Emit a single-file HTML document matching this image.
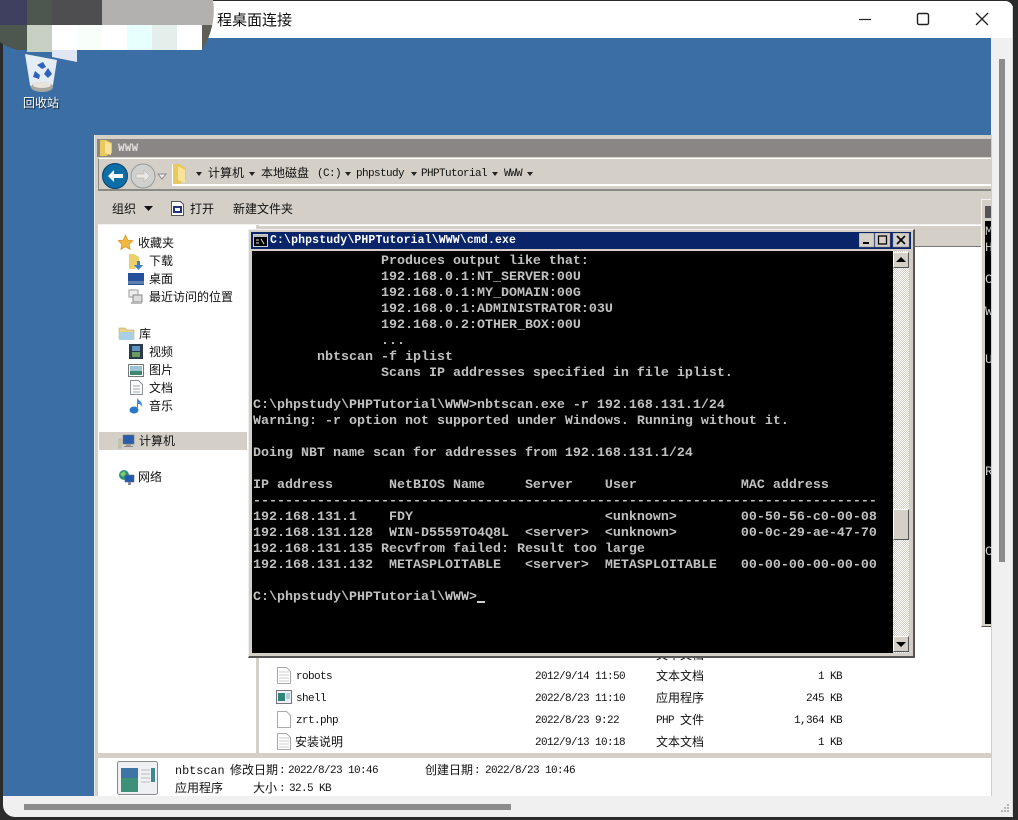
<!DOCTYPE html>
<html><head><meta charset="utf-8">
<style>
html,body{margin:0;padding:0;background:#2b2b2b}
body{width:1018px;height:820px;position:relative;overflow:hidden;font-family:"Liberation Mono","WenQuanYi Zen Hei","Noto Sans CJK SC",monospace;font-size:12px;color:#111}
.a{position:absolute}
.t{position:absolute;white-space:pre;line-height:16px;margin-top:1px}
.n{font-size:11px;letter-spacing:-.6px}
.d{position:absolute;top:172px;width:0;height:0;border:3px solid transparent;border-top:4px solid #222;border-bottom:0}
pre{margin:0}
</style></head><body>
<!-- window frame -->
<div class="a" style="left:3px;top:1px;width:1010px;height:816px;background:#f0f0f0;border-radius:0 8px 0 12px"></div>
<div class="a" style="left:3px;top:1px;width:1010px;height:37px;background:#fff;border-radius:0 8px 0 0"></div>
<div class="a" style="left:3px;top:38px;width:988px;height:758px;background:#3a6ea5"></div>
<div class="a" style="left:1012px;top:6px;width:1px;height:810px;background:#d8d8d8"></div>
<!-- window title -->
<div class="t" style="left:217px;top:9px;line-height:20px;font-size:15px;font-family:'Noto Sans CJK SC',sans-serif;color:#111">程桌面连接</div>
<svg class="a" style="left:850px;top:8px" width="150" height="24" fill="none" stroke="#222">
<path d="M9 11.500H21" stroke-width="1.200"/><rect x="67.500" y="5.500" width="11" height="11" rx="1.500" stroke-width="1.400"/><path d="M126 5L138 17M138 5L126 17" stroke-width="1.300"/>
</svg>
<!-- window scrollbars -->
<div class="a" style="left:999px;top:59px;width:6px;height:503px;background:#8c8c8c"></div>
<div class="a" style="left:24px;top:804px;width:487px;height:6px;background:#8c8c8c"></div>
<svg class="a" style="left:996px;top:801px" width="16" height="15" fill="#b5b5b5"><rect x="11" y="3" width="2" height="2"/><rect x="8" y="6" width="2" height="2"/><rect x="11" y="6" width="2" height="2"/><rect x="5" y="9" width="2" height="2"/><rect x="8" y="9" width="2" height="2"/><rect x="11" y="9" width="2" height="2"/></svg>

<!-- recycle bin -->
<svg class="a" style="left:22px;top:52px" width="38" height="42">
<path d="M3 2L35 8L31 33C29 40 10 40 8 33Z" fill="#e4edf3"/>
<ellipse cx="20" cy="35" rx="11" ry="5" fill="#a8a8a0"/><ellipse cx="20" cy="33" rx="9" ry="3" fill="#e8e4dc"/>
<path d="M15 13l6-3 3 5-4 2zM26 16l4 6-4 4-4-4zM13 19l5 4-1 4-6-2z" fill="#2f62bc"/>
</svg>
<!-- mosaic -->
<div class="a" style="left:0;top:0;width:216px;height:62px;overflow:hidden;clip-path:path('M3 0H213C216 20 210 38 202 50H77V62L52 57L27 52C15 50 6 47 0 42V0Z')">
<div class="a" style="left:0;top:0;width:27px;height:25px;background:#3f4060"></div>
<div class="a" style="left:27px;top:0;width:25px;height:25px;background:#4e5650"></div>
<div class="a" style="left:52px;top:0;width:50px;height:25px;background:#4e4e50"></div>
<div class="a" style="left:102px;top:0;width:114px;height:25px;background:#b3b1af"></div>
<div class="a" style="left:0;top:25px;width:27px;height:25px;background:#4e5650"></div>
<div class="a" style="left:27px;top:25px;width:25px;height:27px;background:#c8d0c4"></div>
<div class="a" style="left:52px;top:25px;width:25px;height:25px;background:#fff"></div>
<div class="a" style="left:77px;top:25px;width:25px;height:25px;background:#f8fffb"></div>
<div class="a" style="left:102px;top:25px;width:25px;height:25px;background:#fff"></div>
<div class="a" style="left:127px;top:25px;width:25px;height:25px;background:#e6ffff"></div>
<div class="a" style="left:152px;top:25px;width:25px;height:25px;background:#e4eeea"></div>
<div class="a" style="left:177px;top:25px;width:25px;height:25px;background:#fff"></div>
<div class="a" style="left:202px;top:25px;width:14px;height:25px;background:#5f5f57"></div>
<div class="a" style="left:52px;top:50px;width:25px;height:12px;background:#e0e6f4"></div>
</div>
<div class="t" style="left:23px;top:95px;font-size:12px;color:#fff;text-shadow:1px 1px 1px #123">回收站</div>

<!-- explorer -->
<div class="a" style="left:94px;top:135px;width:897px;height:661px;background:#d4d0c8;border-left:1px solid #e8e8e4"></div>
<div class="a" style="left:97px;top:139px;width:894px;height:18px;background:#8a8686"></div>
<svg class="a" style="left:99px;top:139px" width="16" height="18"><path d="M1 1h6l6 3v10l-6 3H1z" fill="#e9c95c"/><path d="M6 2l6 3v11l-6-2z" fill="#f7e49a"/></svg>
<div class="t" style="left:118px;top:140px;font-weight:bold;font-size:11px;letter-spacing:.2px;color:#e0ded8">WWW</div>
<div class="a" style="left:98px;top:158px;width:893px;height:33px;border-top:1px solid #fff;border-bottom:2px solid #8a8a86;border-left:1px solid #8a8a86;box-sizing:border-box;background:#d4d0c8"></div>
<div class="a" style="left:172px;top:164px;width:819px;height:22px;background:#d4d0c8;border-left:1px solid #fff;border-bottom:2px solid #fff;box-sizing:border-box"></div>
<svg class="a" style="left:100px;top:160px" width="90" height="32">
<circle cx="15" cy="16" r="12.500" fill="#0e6ea8" stroke="#0a3f68"/><path d="M8 16l6-6v4h9v4h-9v4z" fill="#fff"/>
<circle cx="43" cy="16" r="12" fill="#d0d0cc" stroke="#999"/><path d="M50 16l-6-6v4h-8v4h8v4z" fill="#e8e8e6" stroke="#aaa" stroke-width=".5"/>
<path d="M58 14h8l-4 5z" fill="#eee" stroke="#888"/>
<path d="M73 4h6l7 4v12l-7 4h-6z" fill="#e9c95c"/><path d="M78 6l7 4v13l-7-3z" fill="#f7e49a"/>
</svg>
<!-- breadcrumb -->
<div class="d" style="left:196px"></div><div class="t" style="left:208px;top:165px">计算机</div>
<div class="d" style="left:249px"></div><div class="t" style="left:261px;top:165px">本地磁盘</div>
<div class="t n" style="left:317px;top:165px">(C:)</div>
<div class="d" style="left:345px"></div><div class="t n" style="left:356px;top:165px">phpstudy</div>
<div class="d" style="left:411px"></div><div class="t n" style="left:421px;top:165px">PHPTutorial</div>
<div class="d" style="left:492px"></div><div class="t n" style="left:504px;top:165px">WWW</div>
<div class="d" style="left:527px"></div>
<!-- toolbar -->
<div class="t" style="left:112px;top:201px;font-size:12px">组织</div>
<svg class="a" style="left:144px;top:206px" width="10" height="6"><path d="M0 0h9l-4.500 5z" fill="#111"/></svg>
<svg class="a" style="left:170px;top:201px" width="15" height="16"><path d="M1.500 .5h9l3 3v11h-12z" fill="#fff" stroke="#555"/><rect x="3" y="5" width="9" height="7" fill="#23337e"/><rect x="5" y="7" width="5" height="3" fill="#fff"/></svg>
<div class="t" style="left:190px;top:201px">打开</div>
<div class="t" style="left:233px;top:201px">新建文件夹</div>
<!-- header strip + content -->
<div class="a" style="left:98px;top:225px;width:893px;height:528px;background:#fff"></div>
<div class="a" style="left:256px;top:225px;width:3px;height:528px;background:#d4d0c8"></div>
<div class="a" style="left:259px;top:225px;width:732px;height:1px;background:#fff"></div>
<div class="a" style="left:259px;top:226px;width:722px;height:20px;background:#d4d0c8"></div>
<div class="a" style="left:259px;top:246px;width:722px;height:1px;background:#777"></div>
<div class="a" style="left:98px;top:224px;width:893px;height:1px;background:#f4f2ee"></div>
<!-- sidebar -->
<svg class="a" style="left:117px;top:234px" width="17" height="17"><path d="M8.500 1l2.300 5 5.200.6-3.900 3.500 1.100 5.400-4.700-2.700-4.700 2.700 1.100-5.400L1 6.600l5.200-.6z" fill="#f4b842" stroke="#c88a20" stroke-width=".6"/></svg>
<div class="t" style="left:138px;top:235px">收藏夹</div>
<svg class="a" style="left:128px;top:253px" width="16" height="17"><path d="M1 1h5l5 3v10l-5 2H1z" fill="#edcf6c"/><path d="M9 8h3v4h3l-4.500 5L6 12h3z" fill="#3a7fc8"/></svg>
<div class="t" style="left:149px;top:253px">下载</div>
<svg class="a" style="left:128px;top:272px" width="16" height="14"><rect width="16" height="12" y="1" fill="#25509c"/><rect y="9" width="16" height="3" fill="#5d7fb0"/></svg>
<div class="t" style="left:149px;top:271px">桌面</div>
<svg class="a" style="left:128px;top:289px" width="16" height="16"><rect x="1" y="1" width="9" height="7" fill="#eee" stroke="#999"/><rect x="5" y="6" width="9" height="7" fill="#ddd" stroke="#888"/><rect x="3" y="13" width="11" height="2" fill="#bbb"/></svg>
<div class="t" style="left:149px;top:289px">最近访问的位置</div>
<svg class="a" style="left:118px;top:326px" width="17" height="15"><path d="M1 2h6l2 2h7v9H1z" fill="#e7d48a" stroke="#b09850" stroke-width=".5"/><path d="M1 6h15v8H1z" fill="#a9cfe6"/></svg>
<div class="t" style="left:139px;top:326px">库</div>
<svg class="a" style="left:129px;top:344px" width="14" height="15"><rect width="14" height="15" fill="#2a3b4a"/><rect x="3" y="2" width="8" height="5" fill="#5d93c0"/><rect x="3" y="8" width="8" height="5" fill="#6a9a60"/></svg>
<div class="t" style="left:149px;top:344px">视频</div>
<svg class="a" style="left:128px;top:364px" width="16" height="13"><rect x=".5" y=".5" width="15" height="12" fill="#fff" stroke="#777"/><rect x="2" y="2" width="12" height="5" fill="#9cc4d8"/><rect x="2" y="7" width="12" height="4" fill="#3d8a70"/></svg>
<div class="t" style="left:149px;top:362px">图片</div>
<svg class="a" style="left:130px;top:380px" width="13" height="15"><path d="M.5.500h8l4 4v10H.5z" fill="#fbfbfb" stroke="#8a8f98"/><path d="M3 6h7M3 9h7M3 12h7" stroke="#9aa"/></svg>
<div class="t" style="left:149px;top:380px">文档</div>
<svg class="a" style="left:129px;top:397px" width="15" height="17"><ellipse cx="5" cy="13" rx="4.500" ry="3.500" fill="#2a78c8"/><path d="M8 12V1c2 3 6 4 5 9-1-3-3-3-4-3v5z" fill="#3a8bd8"/></svg>
<div class="t" style="left:149px;top:398px">音乐</div>
<div class="a" style="left:99px;top:432px;width:148px;height:18px;background:#d4d0c8"></div>
<svg class="a" style="left:118px;top:434px" width="17" height="15"><rect x="5" y="1" width="11" height="9" fill="#2a5caa" stroke="#777" stroke-width=".6"/><rect x="8" y="10" width="5" height="2" fill="#999"/><rect x="6" y="12" width="9" height="1" fill="#888"/><rect x="1" y="5" width="2" height="9" fill="#cfd8a8" stroke="#888" stroke-width=".4"/></svg>
<div class="t" style="left:139px;top:433px">计算机</div>
<svg class="a" style="left:118px;top:469px" width="17" height="17"><circle cx="6" cy="6" r="5" fill="#2f8f7f"/><path d="M2 5l4-3 2 3-3 3z" fill="#7fce6a"/><rect x="7" y="6" width="9" height="7" fill="#1f5bb0" stroke="#667" stroke-width=".6"/><rect x="10" y="13" width="3" height="3" fill="#889"/></svg>
<div class="t" style="left:138px;top:469px">网络</div>

<!-- files -->
<div class="a" style="left:259px;top:648px;width:722px;height:105px;overflow:hidden">
<div class="t" style="left:397px;top:-1px;font-size:12px">文本文档</div>
<svg class="a" style="left:19px;top:-6px" width="14" height="18"><path d="M.5.500h9l4 4v11H.5z" fill="#fff" stroke="#aaa"/></svg>
</div>
<svg class="a" style="left:277px;top:667px" width="14" height="17"><path d="M.5.500h9l4 4v12H.5z" fill="#fff" stroke="#aaa"/><path d="M2 5h10M2 8h10M2 11h10M2 14h10" stroke="#ccc"/></svg>
<svg class="a" style="left:276px;top:690px" width="16" height="14"><rect x=".5" y=".5" width="15" height="13" fill="#eef" stroke="#777"/><rect x="2" y="3" width="7" height="8" fill="#2f8578"/><path d="M10 4h4M10 6h4M10 8h4" stroke="#8aa"/></svg>
<svg class="a" style="left:277px;top:711px" width="14" height="17"><path d="M.5.500h9l4 4v12H.5z" fill="#fff" stroke="#aaa"/></svg>
<svg class="a" style="left:277px;top:733px" width="14" height="17"><path d="M.5.500h9l4 4v12H.5z" fill="#fff" stroke="#aaa"/><path d="M2 5h10M2 8h10M2 11h10M2 14h10" stroke="#ccc"/></svg>
<div class="t n" style="left:296px;top:668px">robots</div>
<div class="t n" style="left:296px;top:690px">shell</div>
<div class="t n" style="left:296px;top:712px">zrt.php</div>
<div class="t" style="left:295px;top:734px">安装说明</div>
<div class="t n" style="left:535px;top:668px">2012/9/14 11:50</div>
<div class="t n" style="left:535px;top:690px">2022/8/23 11:10</div>
<div class="t n" style="left:535px;top:712px">2022/8/23 9:22</div>
<div class="t n" style="left:535px;top:734px">2012/9/13 10:18</div>
<div class="t" style="left:656px;top:668px">文本文档</div>
<div class="t" style="left:656px;top:690px">应用程序</div>
<div class="t n" style="left:656px;top:712px">PHP</div><div class="t" style="left:680px;top:712px">文件</div>
<div class="t" style="left:656px;top:734px">文本文档</div>
<div class="t n" style="right:176px;top:668px">1 KB</div>
<div class="t n" style="right:176px;top:690px">245 KB</div>
<div class="t n" style="right:176px;top:712px">1,364 KB</div>
<div class="t n" style="right:176px;top:734px">1 KB</div>
<!-- status -->
<div class="a" style="left:98px;top:753px;width:893px;height:5px;background:#d4d0c8"></div>
<div class="a" style="left:98px;top:758px;width:893px;height:38px;background:#fff"></div>
<svg class="a" style="left:117px;top:761px" width="41" height="35"><rect x=".5" y=".5" width="40" height="33" rx="2" fill="#eef0f4" stroke="#888"/><rect x="4" y="7" width="17" height="24" fill="#3f9078"/><path d="M4 7h17v10H4z" fill="#3f75a5"/><path d="M24 9h9M24 13h9M24 17h9M24 21h9" stroke="#bbb"/><rect x="34" y="7" width="4" height="14" fill="#3f8a90"/></svg>
<div class="t" style="left:175px;top:762px;font-size:11.800px">nbtscan</div>
<div class="t" style="left:230px;top:762px">修改日期</div><div class="t n" style="left:279px;top:762px">:</div>
<div class="t n" style="left:288px;top:762px">2022/8/23 10:46</div>
<div class="t" style="left:175px;top:780px">应用程序</div>
<div class="t" style="left:253px;top:780px">大小</div><div class="t n" style="left:279px;top:780px">:</div>
<div class="t n" style="left:289px;top:780px">32.5 KB</div>
<div class="t" style="left:425px;top:762px">创建日期</div><div class="t n" style="left:474px;top:762px">:</div>
<div class="t n" style="left:485px;top:762px">2022/8/23 10:46</div>

<!-- back cmd -->
<div class="a" style="left:981px;top:199px;width:10px;height:428px;background:#d4d0c8;border-left:1px solid #f4f4f4;border-top:1px solid #f4f4f4;border-bottom:1px solid #555;box-sizing:border-box"></div>
<div class="a" style="left:985px;top:206px;width:6px;height:12px;background:#555"></div>
<div class="a" style="left:985px;top:221px;width:6px;height:403px;background:#000;overflow:hidden;color:#ccc;font-size:13px">
<div class="t" style="left:0;top:2px">M</div><div class="t" style="left:0;top:18px">H</div><div class="t" style="left:0;top:50px">C</div><div class="t" style="left:0;top:82px">W</div><div class="t" style="left:0;top:130px">U</div><div class="t" style="left:0;top:242px">R</div><div class="t" style="left:0;top:322px">C</div>
</div>

<!-- cmd -->
<div class="a" style="left:248px;top:229px;width:667px;height:429px;background:#d4d0c8;border-top:1px solid #eee;border-left:1px solid #eee;border-right:2px solid #555;border-bottom:2px solid #555;box-sizing:border-box"></div>
<div class="a" style="left:251px;top:232px;width:660px;height:17px;background:#0a246a"></div>
<svg class="a" style="left:253px;top:234px" width="15" height="13"><rect x=".5" y=".5" width="14" height="12" fill="#000" stroke="#ccc"/><rect x="1" y="1" width="13" height="2" fill="#bbb"/><path d="M3 6h3M3 9h3M8 5l3 5" stroke="#ddd"/></svg>
<div class="t" style="left:270px;top:232px;color:#fff;font-weight:bold;font-size:11.500px;letter-spacing:.13px;line-height:15px;font-family:'Liberation Mono',monospace">C:\phpstudy\PHPTutorial\WWW\cmd.exe</div>
<svg class="a" style="left:859px;top:233px" width="52" height="15">
<rect x="0" y="0" width="15" height="14" fill="#d4d0c8" stroke="#888" stroke-width=".5"/><rect x="4" y="9" width="6" height="2" fill="#000"/>
<rect x="16" y="0" width="15" height="14" fill="#d4d0c8" stroke="#888" stroke-width=".5"/><rect x="19.500" y="3" width="8" height="8" fill="none" stroke="#000" stroke-width="1.300"/>
<rect x="34" y="0" width="16" height="14" fill="#d4d0c8" stroke="#888" stroke-width=".5"/><path d="M38 3l8 8M46 3l-8 8" stroke="#000" stroke-width="1.600"/>
</svg>
<div class="a" style="left:252px;top:251px;width:641px;height:402px;background:#000;overflow:hidden">
<pre style="position:absolute;left:1px;top:3px;margin:0;font:bold 13.333px/16px 'Liberation Mono',monospace;color:#c0c0c0">                Produces output like that:
                192.168.0.1:NT_SERVER:00U
                192.168.0.1:MY_DOMAIN:00G
                192.168.0.1:ADMINISTRATOR:03U
                192.168.0.2:OTHER_BOX:00U
                ...
        nbtscan -f iplist
                Scans IP addresses specified in file iplist.

C:\phpstudy\PHPTutorial\WWW&gt;nbtscan.exe -r 192.168.131.1/24
Warning: -r option not supported under Windows. Running without it.

Doing NBT name scan for addresses from 192.168.131.1/24

IP address       NetBIOS Name     Server    User             MAC address
------------------------------------------------------------------------------
192.168.131.1    FDY                        &lt;unknown&gt;        00-50-56-c0-00-08
192.168.131.128  WIN-D5559TO4Q8L  &lt;server&gt;  &lt;unknown&gt;        00-0c-29-ae-47-70
192.168.131.135 Recvfrom failed: Result too large
192.168.131.132  METASPLOITABLE   &lt;server&gt;  METASPLOITABLE   00-00-00-00-00-00

C:\phpstudy\PHPTutorial\WWW&gt;</pre>
<div class="a" style="left:225px;top:350px;width:8px;height:2px;background:#d0d0d0"></div>
</div>
<!-- cmd scrollbar -->
<div class="a" style="left:893px;top:251px;width:16px;height:402px;background:repeating-conic-gradient(#d4d0c8 0 25%,#fff 0 50%) 0 0/2px 2px"></div>
<div class="a" style="left:893px;top:252px;width:16px;height:16px;background:#d4d0c8;border:1px solid;border-color:#fff #555 #555 #fff;box-sizing:border-box"></div>
<svg class="a" style="left:896px;top:257px" width="10" height="6"><path d="M5 0l5 5H0z" fill="#000"/></svg>
<div class="a" style="left:893px;top:509px;width:16px;height:31px;background:#d4d0c8;border:1px solid;border-color:#fff #555 #555 #fff;box-sizing:border-box"></div>
<div class="a" style="left:893px;top:636px;width:16px;height:16px;background:#d4d0c8;border:1px solid;border-color:#fff #555 #555 #fff;box-sizing:border-box"></div>
<svg class="a" style="left:896px;top:642px" width="10" height="6"><path d="M0 0h10L5 5z" fill="#000"/></svg>
</body></html>
